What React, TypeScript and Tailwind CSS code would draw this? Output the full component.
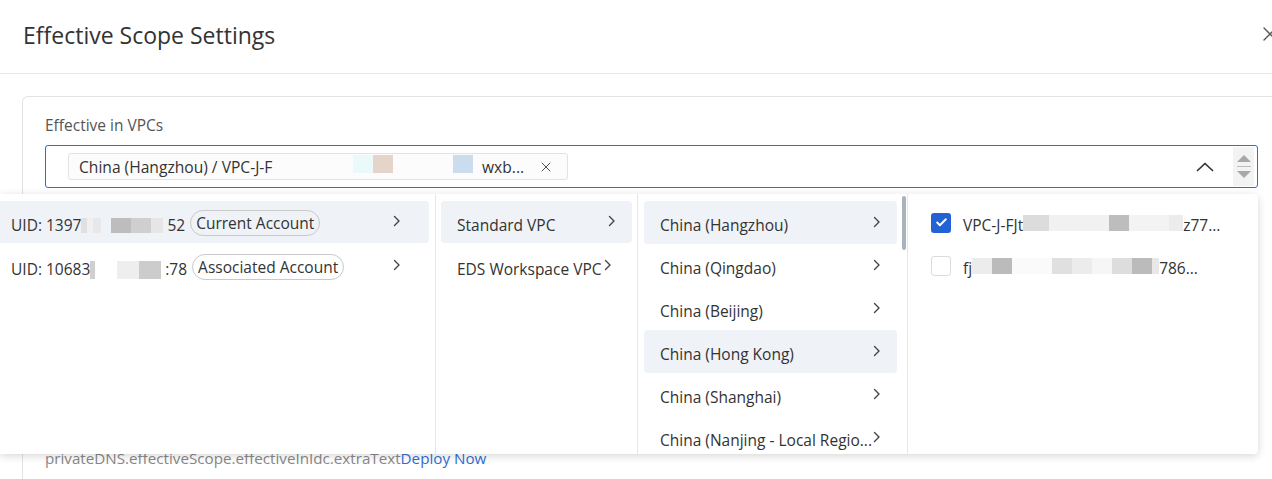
import { X, Check } from "lucide-react";

type Block = [number, string];

// pixelated (masked) fragments of ids in the screenshot
function Masked({ blocks, h = 16 }: { blocks: Block[]; h?: number }) {
  return (
    <span className="inline-flex items-center">
      {blocks.map(([w, c], i) => (
        <span key={i} className="inline-block" style={{ width: w, height: h, background: c }} />
      ))}
    </span>
  );
}

function Arrow() {
  return (
    <svg viewBox="0 0 8 12" className="-mt-[9px] h-[12px] w-[8px] shrink-0" fill="none">
      <path d="M1.5 1.5 6 6l-4.5 4.5" stroke="#444" strokeWidth="1.4" strokeLinecap="round" strokeLinejoin="round" />
    </svg>
  );
}

const regions = [
  "China (Hangzhou)",
  "China (Qingdao)",
  "China (Beijing)",
  "China (Hong Kong)",
  "China (Shanghai)",
  "China (Nanjing - Local Regio...",
];

export default function App() {
  return (
    <div
      className="relative h-[479px] w-[1272px] overflow-hidden bg-white text-[#333]"
      style={{ fontFamily: '"Open Sans", "Noto Sans", sans-serif' }}
    >
      {/* dialog header */}
      <div className="flex h-[74px] items-center justify-between border-b border-[#e6e6e6] pl-[23px]">
        <h2 className="-mt-[3px] text-[23px] leading-none text-[#333]">Effective Scope Settings</h2>
        <svg viewBox="0 0 16 16" className="-mr-[6px] -mt-[6px] h-[16px] w-[16px]" fill="none">
          <path d="M2 2l12 12M14 2 2 14" stroke="#555" strokeWidth="1.4" strokeLinecap="round" />
        </svg>
      </div>

      {/* body */}
      <div className="pl-[22px] pt-[22px]">
        <div className="h-[420px] rounded-tl-[6px] border-l border-t border-[#e3e3e3] pl-[22px] pt-[17px]">
          <div className="text-[15.5px] leading-[22px] text-[#555]">Effective in VPCs</div>
          <div className="mt-[9px] flex h-[43px] w-[1213px] items-center rounded-[3px] border border-[#2a6fd8] pl-[22px]">
            <div className="flex h-[27px] w-[500px] items-center rounded-[3px] border border-[#e2e2e2] bg-[#fcfcfc] pl-[10px] pt-[2px] text-[15.6px] text-[#333]">
              <span className="w-[197px] overflow-hidden whitespace-nowrap">China (Hangzhou) / VPC-J-F</span>
              <span className="ml-[77px]">
                <Masked h={18} blocks={[[20, "#eafafb"], [20, "#e4d4ca"], [60, "transparent"], [20, "#cadced"]]} />
              </span>
              <span className="ml-[9px]">wxb...</span>
              <X className="-mt-[2px] ml-[14px] h-[16px] w-[16px] text-[#444]" strokeWidth={1.4} />
            </div>
            <svg viewBox="0 0 18 10" className="ml-auto mr-[19px] h-[10px] w-[18px]" fill="none">
              <path d="M1.5 8.5 9 1.5l7.5 7" stroke="#333" strokeWidth="1.7" strokeLinecap="round" strokeLinejoin="round" />
            </svg>
            <div className="mr-[3px] flex h-[39px] w-[21px] flex-col items-center justify-center gap-[4px] bg-[#f3f3f3]">
              <span className="h-0 w-0 border-x-[7px] border-b-[7px] border-x-transparent border-b-[#a8a8a8]" />
              <span className="h-px w-[14px] bg-[#bdbdbd]" />
              <span className="h-0 w-0 border-x-[7px] border-t-[7px] border-x-transparent border-t-[#a8a8a8]" />
            </div>
          </div>
          <div className="mt-[259px] text-[15.2px] text-[#888]">
            privateDNS.effectiveScope.effectiveInIdc.extraText<span className="text-[#2d6fd6]">Deploy Now</span>
          </div>
        </div>
      </div>

      {/* cascader dropdown */}
      <div className="absolute left-0 top-[194px] flex h-[260px] w-[1258px] rounded-r-[4px] bg-white text-[15.5px] text-[#333] shadow-[0_2px_8px_rgba(0,0,0,0.16)]">
        {/* accounts */}
        <div className="w-[436px] border-r border-[#e6e6e6] pr-[6px] pt-[7px]">
          <div className="flex h-[42px] items-center rounded-r-[4px] bg-[#eff2f6] pl-[11px] pr-[28px] pt-[7px]">
            <span>UID: 1397</span>
            <Masked
              h={15}
              blocks={[[6, "#e0e0e0"], [6, "#f0f0f0"], [8, "#e8e8e8"], [10, "transparent"], [20, "#bdbdbd"], [20, "#cfcfcf"], [12, "#e6e6e6"], [4, "transparent"]]}
            />
            <span>52</span>
            <span className="-mt-[6px] ml-[5px] rounded-full border border-[#c9c9c9] px-[5px] pt-[1px] leading-[23px]">Current Account</span>
            <span className="ml-auto"><Arrow /></span>
          </div>
          <div className="mt-[2px] flex h-[42px] items-center pl-[11px] pr-[28px] pt-[7px]">
            <span>UID: 10683</span>
            <Masked h={18} blocks={[[5, "#cfcfcf"], [22, "transparent"], [22, "#eeeeee"], [22, "#cccccc"], [4, "transparent"]]} />
            <span>:78</span>
            <span className="-mt-[6px] ml-[5px] rounded-full border border-[#c9c9c9] px-[5px] pt-[1px] leading-[23px]">Associated Account</span>
            <span className="ml-auto"><Arrow /></span>
          </div>
        </div>

        {/* vpc types */}
        <div className="w-[202px] border-r border-[#e6e6e6] px-[5px] pt-[7px]">
          <div className="flex h-[42px] items-center rounded-[4px] bg-[#eff2f6] pl-[16px] pr-[16px] pt-[7px]">
            <span className="flex-1">Standard VPC</span>
            <Arrow />
          </div>
          <div className="mt-[2px] flex h-[42px] items-center pl-[16px] pr-[14px] pt-[7px]">
            <span className="whitespace-nowrap">EDS Workspace VPC</span>
            <span className="ml-[3px]"><Arrow /></span>
          </div>
        </div>

        {/* regions */}
        <div className="relative w-[270px] overflow-hidden border-r border-[#e6e6e6] pl-[6px] pr-[10px] pt-[7px]">
          {regions.map((r, i) => (
            <div
              key={r}
              className={`flex h-[43px] items-center rounded-[4px] pl-[16px] pr-[16px] pt-[7px] ${i === 0 || i === 3 ? "bg-[#eff2f6]" : ""}`}
            >
              <span className="flex-1 overflow-hidden whitespace-nowrap">{r}</span>
              <Arrow />
            </div>
          ))}
          <div className="absolute right-[1px] top-[2px] h-[54px] w-[4px] rounded-full bg-[#aab3bd]" />
        </div>

        {/* vpcs */}
        <div className="flex-1 pl-[23px] pt-[7px]">
          <div className="flex h-[43px] items-center">
            <span className="flex h-[20px] w-[20px] items-center justify-center rounded-[3px] bg-[#2262d4]">
              <Check className="h-[13px] w-[13px] text-white" strokeWidth={3.5} />
            </span>
            <span className="ml-[12px] pt-[6px]">VPC-J-FJt</span>
            <Masked
              h={16}
              blocks={[[26, "#dcdcdc"], [60, "#f1f1f1"], [20, "#bdbdbd"], [40, "#f3f3f3"], [14, "#ececec"]]}
            />
            <span className="pt-[6px]">z77...</span>
          </div>
          <div className="flex h-[43px] items-center">
            <span className="h-[20px] w-[20px] rounded-[3px] border border-[#dcdcdc] bg-white" />
            <span className="ml-[12px] pt-[6px]">fj</span>
            <Masked
              h={16}
              blocks={[[20, "#ececec"], [20, "#bbbbbb"], [40, "#fafafa"], [20, "#e0e0e0"], [20, "#ececec"], [20, "#f6f6f6"], [20, "#dddddd"], [20, "#bbbbbb"], [7, "#e8e8e8"]]}
            />
            <span className="pt-[6px]">786...</span>
          </div>
        </div>
      </div>
    </div>
  );
}
